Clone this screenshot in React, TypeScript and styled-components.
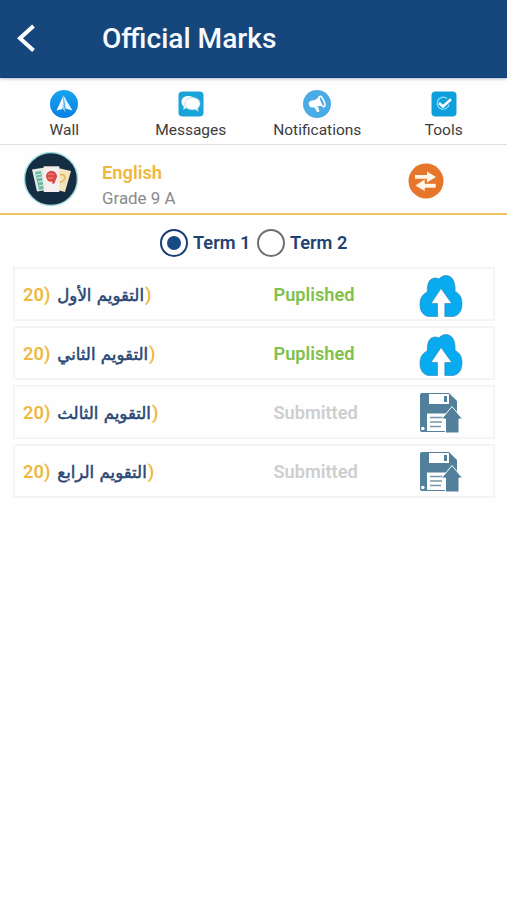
import React from "react";
import styled, { createGlobalStyle } from "styled-components";

const GlobalStyle = createGlobalStyle`
  * { box-sizing: border-box; }
  body { margin: 0; background: #fefefe; font-family: Roboto, "DejaVu Sans", sans-serif; }
`;

const Screen = styled.main`
  width: 507px;
  height: 900px;
  overflow: hidden;
  background: #fefefe;
`;

const Header = styled.header`
  height: 78px;
  display: flex;
  align-items: center;
  padding-left: 17px;
  background: #16477c;
  border-bottom: 1px solid #123d72;
  box-shadow: 0 1px 3px #b4bdd0;
`;

const BackButton = styled.button`
  width: 18px;
  height: 30px;
  padding: 0;
  border: 0;
  background: none;
  svg { display: block; }
`;

const Title = styled.h1`
  margin: 0 0 0 67px;
  color: #f7faff;
  font-size: 28.1px;
  line-height: 32px;
  font-weight: 500;
`;

const Nav = styled.nav`
  height: 67px;
  display: grid;
  grid-template-columns: repeat(4, 1fr);
  padding-left: 1px;
  border-bottom: 1px solid #dedede;
`;

const NavItem = styled.a`
  display: flex;
  flex-direction: column;
  align-items: center;
  padding-top: 12px;
  color: #3c3c3c;
  font-size: 15.5px;
  line-height: 18px;
  svg { display: block; margin-bottom: 3px; }
`;

const Course = styled.section`
  height: 70px;
  display: flex;
  align-items: flex-start;
  padding: 6px 63px 0 23px;
  border-bottom: 2px solid #edc45d;
`;

const CourseText = styled.div`
  margin: 9px 0 0 23px;
  flex: 1;
`;

const CourseName = styled.div`
  color: #eeb73e;
  font-size: 18.3px;
  line-height: 26px;
  font-weight: 600;
`;

const Grade = styled.div`
  color: #8a8a8a;
  font-size: 16.9px;
  line-height: 24px;
`;

const SwitchButton = styled.button`
  margin-top: 12px;
  padding: 0;
  border: 0;
  background: none;
  svg { display: block; }
`;

const Terms = styled.div`
  height: 52px;
  display: flex;
  align-items: center;
  gap: 6.5px;
  padding: 4px 0 0 160px;
`;

const Term = styled.label`
  display: flex;
  align-items: center;
  gap: 5px;
  color: #1f4273;
  font-size: 18.2px;
  line-height: 24px;
  font-weight: 600;
`;

const Radio = styled.span<{ $selected?: boolean }>`
  width: 28px;
  height: 28px;
  display: grid;
  place-items: center;
  border: 2.5px solid ${({ $selected }) => ($selected ? "#163f70" : "#707070")};
  border-radius: 50%;
  &::after {
    content: "";
    width: 14px;
    height: 14px;
    border-radius: 50%;
    background: ${({ $selected }) => ($selected ? "#174a83" : "transparent")};
  }
`;

const MarksList = styled.div`
  display: flex;
  flex-direction: column;
  gap: 5px;
  padding: 0 12px 0 13px;
`;

const MarkRow = styled.article`
  height: 54px;
  display: grid;
  grid-template-columns: 250.5px 144px 45px;
  align-items: center;
  padding-left: 8px;
  border: 2px solid #f4f4f4;
`;

const Assessment = styled.div`
  display: flex;
  align-items: center;
  color: #edb941;
  font-size: 18.3px;
  font-weight: 600;
  line-height: 25px;
`;

const ArabicName = styled.span`
  margin: 2px 1px 0 7px;
  color: #294673;
  font-family: "DejaVu Sans", sans-serif;
  font-size: 16.6px;
  font-weight: 400;
  -webkit-text-stroke: 0.5px #294673;
  white-space: nowrap;
`;

const Status = styled.span<{ $published: boolean }>`
  margin-top: 2px;
  color: ${({ $published }) => ($published ? "#80c14b" : "#cecece")};
  font-size: 18.2px;
  line-height: 24px;
  font-weight: 600;
`;

const IconSlot = styled.span`
  height: 44px;
  margin: 3px 0 0 1px;
  svg { display: block; }
`;

function WallIcon() {
  return (
    <svg width="28" height="28" viewBox="0 0 28 28">
      <defs><linearGradient id="wall" x2="0" y2="1"><stop stopColor="#18a5ee" /><stop offset="1" stopColor="#097fe3" /></linearGradient></defs>
      <circle cx="14" cy="14" r="14" fill="url(#wall)" />
      <path d="m13.5 5.5-7 15 6-1.5Z" fill="#fff" />
      <path d="m13.5 5.5 9 15-7-2Z" fill="#eaf7ff" />
      <path d="m13.2 7-.2 12 2.5 3.2-.8-3.4Z" fill="#b9d9f1" />
    </svg>
  );
}

function MessagesIcon() {
  return (
    <svg width="28" height="28" viewBox="0 0 28 28">
      <rect x="1.5" y="1.5" width="25" height="25" rx="4" fill="#1aa3d9" />
      <path d="M4.5 12c0-4 3.2-6 7-6 4.8 0 7.2 2.8 7.2 6 0 4-3.2 6-7 6l-3 .2-2.5 1.5.7-3C5.4 15.5 4.5 14 4.5 12Z" fill="#fff" />
      <path d="M8 14c0-4 3.3-6.5 7.5-6.5s7.6 2.5 7.6 6c0 2-.9 3.6-2.3 4.7l.5 3.1-3-1.7c-6 1.2-10.3-1.5-10.3-5.6Z" fill="#fff" stroke="#83cce9" strokeWidth=".7" />
    </svg>
  );
}

function NotificationsIcon() {
  return (
    <svg width="28" height="28" viewBox="0 0 28 28">
      <circle cx="14" cy="14" r="14" fill="#4aabe5" />
      <path d="M6 15.2c-1-2 .2-4 2-4.5 4.2-.5 6.8-2 8.3-5l5.2 11.4c-3-1.5-6.8-1.2-10.4.2-2 .8-4.3-.1-5.1-2.1Z" fill="#fff" />
      <ellipse cx="19" cy="11.5" rx="1.9" ry="5.5" transform="rotate(-24 19 11.5)" fill="#4aabe5" stroke="#fff" strokeWidth="1.6" />
      <path d="m11 17 4-.7 1.5 5.4-2.4.4Z" fill="#fff" />
    </svg>
  );
}

function ToolsIcon() {
  return (
    <svg width="28" height="28" viewBox="0 0 28 28">
      <rect x="1.5" y="1.5" width="25" height="25" rx="4" fill="#0fa0dc" />
      <path d="M17 8.6a6 6 0 1 0 2 6" fill="none" stroke="#94e2ff" strokeWidth="1.2" />
      <path d="m9 13 4 3.4 8-7.2" fill="none" stroke="#fff" strokeWidth="2.6" />
    </svg>
  );
}

function CourseIcon() {
  return (
    <svg width="56" height="56" viewBox="0 0 56 56">
      <circle cx="28" cy="28" r="26.5" fill="#152d42" stroke="#a8dce0" strokeWidth="1.5" />
      <path d="m9 18.5 13-2 4 22-12 2Z" fill="#e5ebe3" />
      <path d="m12 21 6-1 3 18-5 1Z" fill="#69b9a7" />
      <path d="m13 24 5-1m-4 4 5-1m-4 5 5-1m-4 5 5-1" stroke="#e7efe6" />
      <path d="m35 17 13 3-6 21-12-3Z" fill="#f3e4bb" />
      <path d="M37 24c7-2 6 7 0 7" fill="none" stroke="#e5bb65" strokeWidth="1.8" />
      <path d="M20.7 15.3h15.6V41H20.7Z" fill="#f5f0ef" />
      <circle cx="28.5" cy="25.3" r="5.5" fill="#db4945" />
      <path d="m29 29 3.5-1c0 3-1 5-3 5Z" fill="#db4945" />
      <path d="M25 24c2-2 5-1 6 0m-6 3h5" fill="none" stroke="#ef9b91" />
    </svg>
  );
}

function SwitchIcon() {
  return (
    <svg width="36" height="36" viewBox="0 0 36 36">
      <circle cx="18" cy="18" r="17.5" fill="#e6762b" />
      <path d="M7 12h12V8.5l9 5.5-9 5.5v-3.7H7Z" fill="#fff6e8" />
      <path d="M28 20.5H17V16L7 22.5l10 6V25h11Z" fill="#fff6e8" stroke="#e6762b" strokeWidth=".6" />
    </svg>
  );
}

function CloudIcon() {
  return (
    <svg width="44" height="44" viewBox="0 0 44 44">
      <path d="M9 42.5C3 41 .8 36 1 29.5c.2-6 3-9.5 7.3-11.5C8 10 10 4.5 15.5 4c2 0 3.5.4 4.5 1C25-1.5 37.5 0 36 17.5c4.5 2 7 6 7 12 0 7-2.5 11.5-8.5 13h-8.7V29.5h7L22 14.5l-10 15h6.5v13Z" fill="#08aaf0" stroke="#2785b7" strokeWidth=".6" />
    </svg>
  );
}

function DiskIcon() {
  return (
    <svg width="44" height="44" viewBox="0 0 44 44">
      <path d="M1 3q0-2 2-2h27l8 8v31H3q-2 0-2-2Z" fill="#527f9a" />
      <path d="M10 2h20v10H10Z" fill="#fff" />
      <path d="M25 4h3v6h-3Z" fill="#527f9a" />
      <path d="M8 21.5h20V39H8Z" fill="#fff" />
      <path d="M11 25.5h14M11 30h12M11 34.5h11" stroke="#7898aa" strokeWidth="1.5" />
      <circle cx="3.8" cy="36.5" r="1.8" fill="#fff" />
      <path d="M33 14.5 22.5 27h4v14H40V27h3.5Z" fill="#527f9a" stroke="#fff" strokeWidth="1" />
    </svg>
  );
}

const navigation = [
  { label: "Wall", Icon: WallIcon },
  { label: "Messages", Icon: MessagesIcon },
  { label: "Notifications", Icon: NotificationsIcon },
  { label: "Tools", Icon: ToolsIcon },
];

const assessments = [
  { name: "التقويم الأول", published: true },
  { name: "التقويم الثاني", published: true },
  { name: "التقويم الثالث", published: false },
  { name: "التقويم الرابع", published: false },
];

export default function App() {
  return (
    <Screen>
      <GlobalStyle />
      <Header>
        <BackButton aria-label="Back">
          <svg width="18" height="30" viewBox="0 0 18 30"><path d="M16.5 2 3 14.3l13.5 12.2" fill="none" stroke="#fff" strokeWidth="4" /></svg>
        </BackButton>
        <Title>Official Marks</Title>
      </Header>
      <Nav>
        {navigation.map(({ label, Icon }) => <NavItem key={label}><Icon />{label}</NavItem>)}
      </Nav>
      <Course>
        <CourseIcon />
        <CourseText><CourseName>English</CourseName><Grade>Grade 9 A</Grade></CourseText>
        <SwitchButton aria-label="Switch class"><SwitchIcon /></SwitchButton>
      </Course>
      <Terms>
        <Term><Radio $selected />Term 1</Term>
        <Term><Radio />Term 2</Term>
      </Terms>
      <MarksList>
        {assessments.map(({ name, published }) => (
          <MarkRow key={name}>
            <Assessment>20)<ArabicName dir="rtl" lang="ar">{name}</ArabicName>)</Assessment>
            <Status $published={published}>{published ? "Puplished" : "Submitted"}</Status>
            <IconSlot>{published ? <CloudIcon /> : <DiskIcon />}</IconSlot>
          </MarkRow>
        ))}
      </MarksList>
    </Screen>
  );
}
